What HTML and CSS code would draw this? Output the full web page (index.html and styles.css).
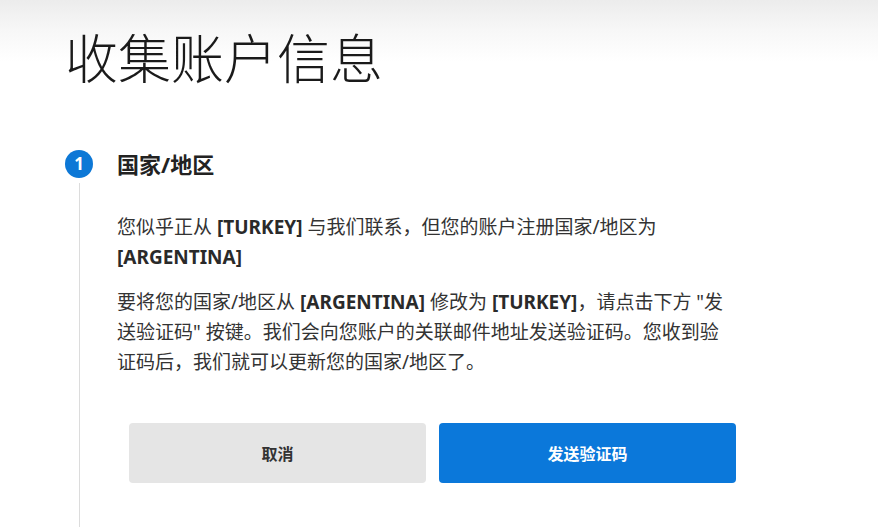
FILE: index.html
```html
<!DOCTYPE html>
<html lang="zh-CN">
<head>
<meta charset="utf-8">
<title>收集账户信息</title>
<link rel="stylesheet" href="styles.css">
</head>
<body>
<div class="page">
  <h1 class="title">收集账户信息</h1>
  <div class="step">
    <div class="rail">
      <div class="badge">1</div>
      <div class="line"></div>
    </div>
    <div class="content">
      <h2 class="step-title">国家/地区</h2>
      <p class="para">您似乎正从 <b>[TURKEY]</b> 与我们联系，但您的账户注册国家/地区为 <b>[ARGENTINA]</b></p>
      <p class="para">要将您的国家/地区从 <b>[ARGENTINA]</b> 修改为 <b>[TURKEY]</b>，请点击下方 "发送验证码" 按键。我们会向您账户的关联邮件地址发送验证码。您收到验证码后，我们就可以更新您的国家/地区了。</p>
      <div class="actions">
        <button class="btn btn-cancel">取消</button>
        <button class="btn btn-primary">发送验证码</button>
      </div>
    </div>
  </div>
</div>
</body>
</html>
```

FILE: styles.css
```css
html, body {
  margin: 0;
  padding: 0;
  height: 100%;
}
body {
  background: linear-gradient(#ececec 0px, #f7f7f7 30px, #ffffff 62px, #ffffff 100%);
  font-family: "Noto Sans", "Noto Sans CJK SC", sans-serif;
  color: #333333;
  overflow: hidden;
}
.page {
  padding: 28px 0 0 65px;
}
.title {
  margin: 0;
  font-size: 53px;
  line-height: 62px;
  font-weight: 300;
  color: #1a1a1a;
}
.step {
  display: flex;
  gap: 24px;
  margin-top: 60px;
}
.rail {
  width: 28px;
  display: flex;
  flex-direction: column;
  align-items: center;
  flex: none;
}
.badge {
  width: 28px;
  height: 28px;
  border-radius: 50%;
  background: #0d78d6;
  color: #ffffff;
  font-size: 17px;
  font-weight: 700;
  line-height: 28px;
  text-align: center;
}
.line {
  width: 1px;
  height: 360px;
  margin-top: 5px;
  background: #dcdcdc;
}
.content {
  width: 620px;
}
.step-title {
  margin: 0;
  font-size: 22px;
  line-height: 28px;
  font-weight: 700;
  color: #222222;
}
.para {
  margin: 34px 0 0 0;
  font-size: 19px;
  line-height: 30px;
  color: #333333;
}
.para + .para {
  margin-top: 15px;
}
.para b {
  font-weight: 700;
  color: #2a2a2a;
}
.actions {
  display: flex;
  gap: 13px;
  margin: 46px 0 0 12px;
}
.btn {
  width: 297px;
  height: 60px;
  border: none;
  border-radius: 4px;
  font-family: "Noto Sans CJK SC", sans-serif;
  font-size: 16px;
  font-weight: 700;
  cursor: pointer;
}
.btn-cancel {
  background: #e5e5e5;
  color: #333333;
}
.btn-primary {
  background: #0b78da;
  color: #ffffff;
}
```
